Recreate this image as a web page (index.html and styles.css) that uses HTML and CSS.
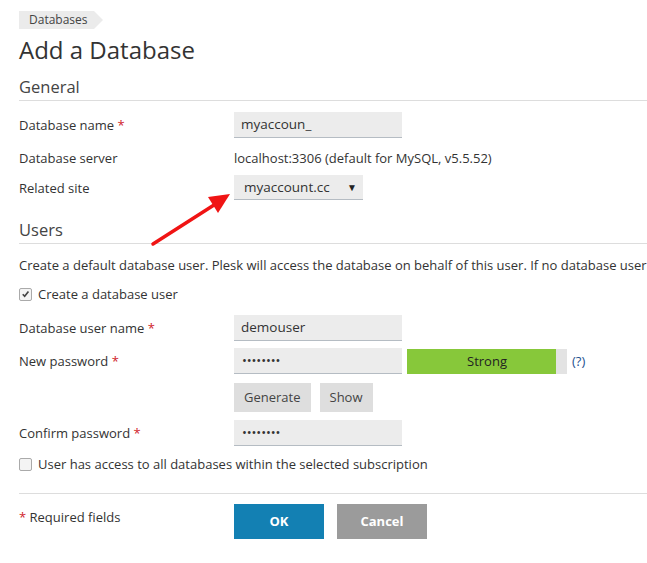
FILE: index.html
```html
<!DOCTYPE html>
<html>
<head>
<meta charset="utf-8">
<link rel="stylesheet" href="styles.css">
</head>
<body>
<div class="page">
  <div class="crumb"><span class="crumb-item">Databases</span></div>
  <h1 class="title">Add a Database</h1>

  <h2 class="section">General</h2>
  <div class="row r-name">
    <div class="label">Database name <span class="req">*</span></div>
    <div class="input">myaccoun_</div>
  </div>
  <div class="row r-server">
    <div class="label">Database server</div>
    <div class="value">localhost:3306 (default for MySQL, v5.5.52)</div>
  </div>
  <div class="row r-site">
    <div class="label">Related site</div>
    <div class="select"><span>myaccount.cc</span><span class="caret">&#9660;</span></div>
  </div>

  <h2 class="section s-users">Users</h2>
  <p class="desc">Create a default database user. Plesk will access the database on behalf of this user. If no database user is created, you will not be able to access the database.</p>
  <div class="check-row c-create"><span class="box checked"><svg viewBox="0 0 12 12" width="12" height="12"><path d="M3 6.2 L5.1 8.5 L9.2 3.3" fill="none" stroke="#444" stroke-width="1.8"/></svg></span>Create a database user</div>

  <div class="row r-user">
    <div class="label">Database user name <span class="req">*</span></div>
    <div class="input">demouser</div>
  </div>
  <div class="row r-pass">
    <div class="label">New password <span class="req">*</span></div>
    <div class="input dots">&#8226;&#8226;&#8226;&#8226;&#8226;&#8226;&#8226;&#8226;</div>
    <div class="strength"><div class="strength-fill"></div><span class="strength-text">Strong</span></div>
    <span class="help">(?)</span>
  </div>
  <div class="row r-btns">
    <div class="label"></div>
    <span class="btn">Generate</span>
    <span class="btn">Show</span>
  </div>
  <div class="row r-confirm">
    <div class="label">Confirm password <span class="req">*</span></div>
    <div class="input dots">&#8226;&#8226;&#8226;&#8226;&#8226;&#8226;&#8226;&#8226;</div>
  </div>
  <div class="check-row c-access"><span class="box"></span>User has access to all databases within the selected subscription</div>

  <div class="footer">
    <div class="label"><span class="req">*</span> Required fields</div>
    <span class="action ok">OK</span>
    <span class="action cancel">Cancel</span>
  </div>

  <svg class="arrow" width="100" height="70" viewBox="0 0 100 70">
    <line x1="5" y1="60" x2="66" y2="21" stroke="#f01414" stroke-width="3.5" stroke-linecap="round"/>
    <polygon points="82,10 60,13 70,29" fill="#f01414"/>
  </svg>
</div>
</body>
</html>
```

FILE: styles.css
```css
html, body {
  margin: 0;
  padding: 0;
  background: #fff;
  overflow: hidden;
}
body {
  font-family: "Open Sans", "Liberation Sans", sans-serif;
  font-size: 13px;
  color: #333;
}
.page {
  position: relative;
  width: 647px;
  height: 563px;
  padding-left: 19px;
  box-sizing: border-box;
  overflow: hidden;
}
.crumb {
  padding-top: 10px;
  height: 18px;
}
.crumb-item {
  position: relative;
  display: inline-block;
  height: 18px;
  line-height: 18px;
  padding: 0 6px 0 10px;
  background: #ebebeb;
  font-size: 12px;
  color: #444;
}
.crumb-item::after {
  content: "";
  position: absolute;
  right: -9px;
  top: 0;
  border-left: 9px solid #ebebeb;
  border-top: 9px solid transparent;
  border-bottom: 9px solid transparent;
}
.title {
  margin: 8px 0 0 0;
  font-size: 24px;
  font-weight: 400;
  line-height: 28px;
  color: #333;
}
.section {
  margin: 12px 0 0 0;
  font-size: 16.5px;
  font-weight: 400;
  line-height: 22px;
  color: #444;
  padding-bottom: 2px;
  border-bottom: 1px solid #ddd;
}
.s-users {
  margin-top: 19px;
}
.row {
  display: flex;
  align-items: center;
  height: 26px;
}
.label {
  width: 215px;
  flex: none;
}
.req {
  color: #d0222a;
}
.r-name { margin-top: 11px; }
.r-server { margin-top: 7px; }
.r-site { margin-top: 4px; height: 25px; }
.input {
  width: 168px;
  height: 26px;
  box-sizing: border-box;
  background: #ececec;
  border-bottom: 1px solid #b5bcc3;
  padding: 0 7px;
  line-height: 25px;
  font-size: 13.5px;
  color: #333;
}
.dots {
  font-size: 13px;
  letter-spacing: -0.1px;
  padding-left: 8px;
}
.select {
  width: 129px;
  height: 25px;
  box-sizing: border-box;
  background: #ececec;
  border-bottom: 1px solid #b5bcc3;
  padding: 0 6px 0 10px;
  display: flex;
  justify-content: space-between;
  align-items: center;
  font-size: 13.5px;
}
.caret {
  font-size: 10px;
  color: #222;
}
.desc {
  margin: 12px 0 0 0;
  white-space: nowrap;
  line-height: 18px;
}
.check-row {
  display: flex;
  align-items: center;
  height: 18px;
  white-space: nowrap;
}
.c-create { margin-top: 11px; }
.c-access { margin-top: 9px; }
.box {
  width: 11px;
  height: 11px;
  border: 1px solid #aaa;
  border-radius: 2px;
  background: #f4f4f4;
  margin-right: 6px;
  display: inline-flex;
  align-items: center;
  justify-content: center;
  overflow: hidden;
}
.box svg { display: block; }
.r-user { margin-top: 12px; }
.r-pass { margin-top: 7px; }
.strength {
  position: relative;
  margin-left: 5px;
  width: 160px;
  height: 25px;
  background: #e3e3e3;
}
.strength-fill {
  width: 149px;
  height: 25px;
  background: #87c83a;
}
.strength-text {
  position: absolute;
  left: 0;
  right: 0;
  top: 0;
  text-align: center;
  line-height: 25px;
  color: #222;
}
.help {
  margin-left: 5px;
  color: #1d4f8f;
}
.r-btns { margin-top: 9px; height: 29px; }
.btn {
  height: 29px;
  line-height: 29px;
  padding: 0 10px;
  background: #dedede;
  color: #444;
  margin-right: 9px;
  font-size: 13px;
}
.r-confirm { margin-top: 8px; }
.footer {
  display: flex;
  align-items: flex-start;
  margin-top: 20px;
  padding-top: 10px;
  border-top: 1px solid #ddd;
}
.footer .label {
  padding-top: 4px;
}
.action {
  width: 90px;
  height: 35px;
  line-height: 35px;
  text-align: center;
  color: #fff;
  font-weight: 700;
  font-size: 13px;
}
.ok { background: #1380b3; margin-right: 13px; }
.cancel { background: #9b9b9b; }
.arrow {
  position: absolute;
  left: 148px;
  top: 184px;
}
```
